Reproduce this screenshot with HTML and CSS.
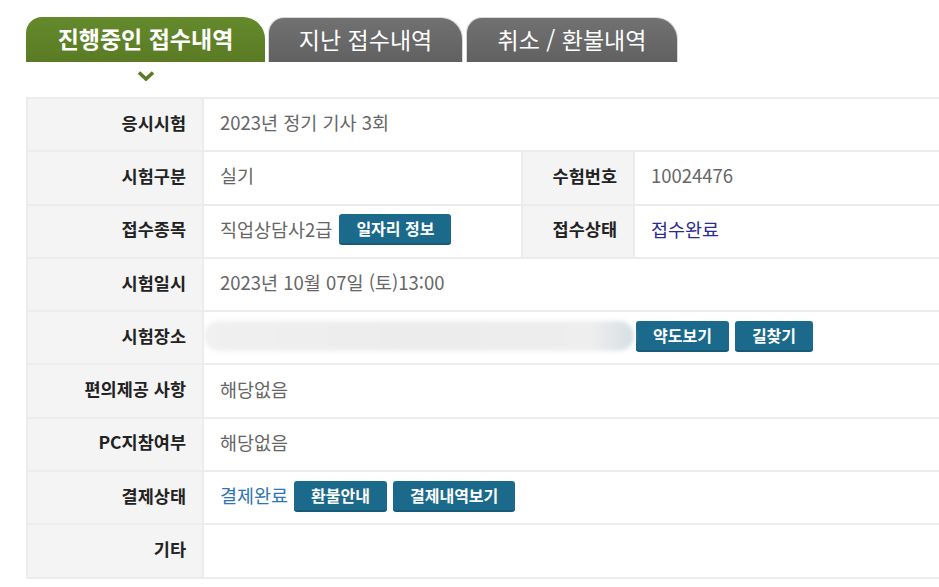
FILE: index.html
```html
<!DOCTYPE html>
<html lang="ko">
<head>
<meta charset="utf-8">
<link rel="stylesheet" href="styles.css">
</head>
<body>
<div class="page">
  <div class="tabs">
    <div class="tab tab-active">진행중인 접수내역</div>
    <div class="tab tab-2">지난 접수내역</div>
    <div class="tab tab-3">취소 / 환불내역</div>
  </div>
  <div class="chev-row">
    <svg class="chev" width="16" height="11" viewBox="0 0 16 11"><path d="M1 2.5 L8 9 L15 2.5" fill="none" stroke="#5a7a26" stroke-width="3.6" stroke-linejoin="miter"/></svg>
  </div>
  <div class="table">
    <div class="th">응시시험</div>
    <div class="td span3">2023년 정기 기사 3회</div>

    <div class="th">시험구분</div>
    <div class="td">실기</div>
    <div class="th">수험번호</div>
    <div class="td last">10024476</div>

    <div class="th">접수종목</div>
    <div class="td">직업상담사2급<span class="btn btn-ml">일자리 정보</span></div>
    <div class="th">접수상태</div>
    <div class="td last status">접수완료</div>

    <div class="th">시험일시</div>
    <div class="td span3">2023년 10월 07일 (토)13:00</div>

    <div class="th">시험장소</div>
    <div class="td span3 place"><span class="blur"></span><span class="btn">약도보기</span><span class="btn">길찾기</span></div>

    <div class="th">편의제공 사항</div>
    <div class="td span3">해당없음</div>

    <div class="th">PC지참여부</div>
    <div class="td span3">해당없음</div>

    <div class="th">결제상태</div>
    <div class="td span3"><span class="paid">결제완료</span><span class="btn">환불안내</span><span class="btn">결제내역보기</span></div>

    <div class="th">기타</div>
    <div class="td span3"></div>
  </div>
</div>
</body>
</html>
```

FILE: styles.css
```css
html, body {
  margin: 0;
  padding: 0;
  background: #fff;
}
body {
  width: 939px;
  height: 587px;
  overflow: hidden;
  font-family: "Noto Sans CJK KR", "Noto Sans", sans-serif;
}
.page {
  padding: 17px 0 0 26px;
}
.tabs {
  display: flex;
  gap: 3px;
  height: 45px;
}
.tab {
  height: 45px;
  box-sizing: border-box;
  display: flex;
  align-items: center;
  justify-content: center;
  color: #fff;
  font-size: 23px;
  border-radius: 16px 22px 0 0;
  padding-bottom: 3px;
}
.tab-active {
  width: 239px;
  background: linear-gradient(#648a2c, #5a7b24);
  font-weight: 700;
}
.tab-2, .tab-3 {
  background: linear-gradient(#717171, #616161);
  border: 1px solid #d8d8d8;
  border-bottom: none;
}
.tab-2 { width: 195px; }
.tab-3 { width: 212px; }
.chev-row {
  height: 35px;
  width: 239px;
  display: flex;
  justify-content: center;
  padding-top: 8px;
  box-sizing: border-box;
}
.table {
  display: grid;
  grid-template-columns: 176px 319px 112px 304px;
  grid-auto-rows: 53.3px;
  border-top: 2px solid #ececec;
  border-left: 2px solid #ececec;
  width: 913px;
}
.th, .td {
  border-bottom: 2px solid #ececec;
  border-right: 2px solid #ececec;
  display: flex;
  align-items: center;
  box-sizing: border-box;
  padding-bottom: 5px;
}
.span3, .last {
  border-right: none;
}
.th {
  background: #f4f4f4;
  justify-content: flex-end;
  padding-right: 16px;
  font-weight: 700;
  font-size: 17.5px;
  color: #222;
}
.td {
  padding-left: 16px;
  font-size: 18.5px;
  color: #666;
}
.span3 {
  grid-column: span 3;
}
.status {
  color: #2a2a96;
}
.paid {
  color: #2f74b5;
}
.btn {
  display: inline-flex;
  align-items: center;
  height: 31px;
  box-sizing: border-box;
  padding: 0 17px 1px;
  background: #1b6a8b;
  color: #fff;
  font-weight: 700;
  font-size: 16px;
  border-radius: 3px;
  border-bottom: 2px solid #155a76;
  margin-left: 6px;
  margin-top: 2px;
}
.btn-ml { margin-left: 7px; }
.place {
  padding-left: 0;
}
.blur {
  display: inline-block;
  width: 430px;
  height: 30px;
  border-radius: 15px;
  background: linear-gradient(90deg, #f0f0f0 0%, #ececec 50%, #eeeeee 90%, #d6dfe4 100%);
  filter: blur(2px);
  margin-right: -4px;
  margin-top: 2px;
}
```
